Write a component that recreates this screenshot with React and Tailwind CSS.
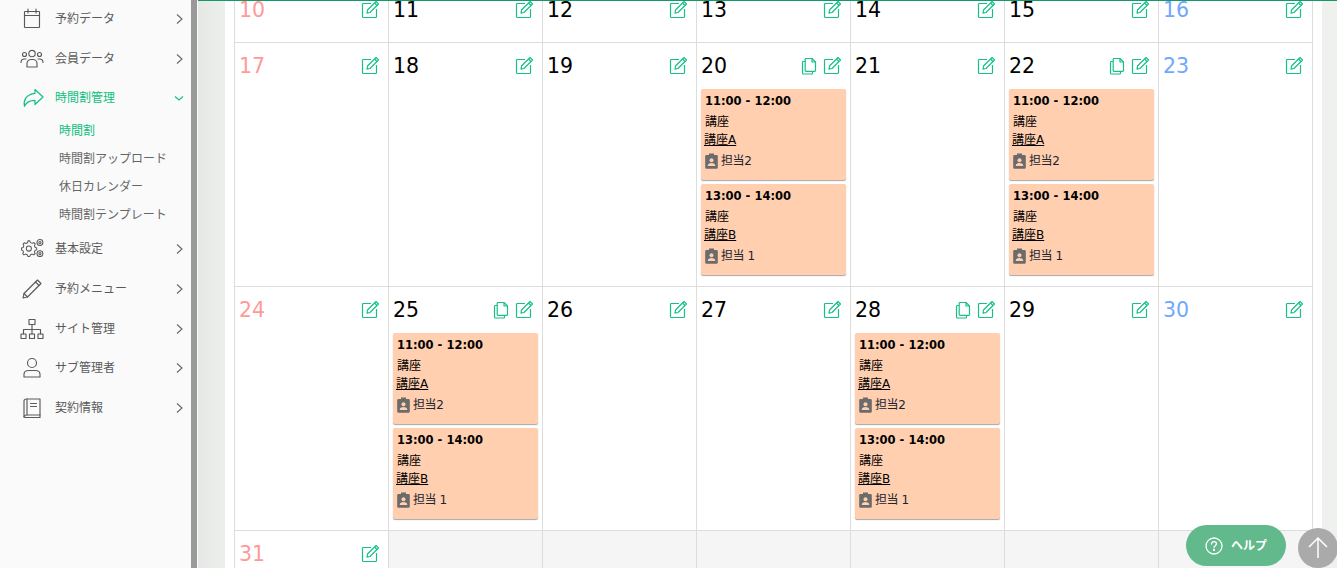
import React from "react";

const FONT = { fontFamily: '"DejaVu Sans","Noto Sans CJK JP",sans-serif' };

function S({ children, size = 24, cls = "" }) {
  return (
    <svg width={size} height={size} viewBox="0 0 24 24" fill="none" stroke="currentColor" strokeWidth="1.15" strokeLinecap="round" strokeLinejoin="round" className={cls}>
      {children}
    </svg>
  );
}

const icons = {
  calendar: (
    <S>
      <rect x="4.5" y="4.5" width="15" height="16" rx="0.5" />
      <path d="M4.5 8.5h15M8 2v4M16 2v4" />
    </S>
  ),
  users: (
    <S size={24}>
      <circle cx="12" cy="6.5" r="3.2" />
      <circle cx="4.5" cy="7.5" r="2" />
      <circle cx="19.5" cy="7.5" r="2" />
      <path d="M7 20v-3.5c0-2.200 1.800-4 4-4h2c2.200 0 4 1.800 4 4V20z" />
      <path d="M1 15.500c0-2 1.500-3.500 3.500-3.500H6M23 15.500c0-2-1.500-3.500-3.500-3.500H18" />
    </S>
  ),
  share: (
    <svg width="24" height="24" viewBox="0 0 24 24" fill="none" stroke="#12bf83" strokeWidth="1.2" strokeLinejoin="round" className="translate-x-[1px]">
      <path d="M14 3.500 22 11l-8 7.500v-4.200c-5 0-8.500 1.200-10.500 6-1.200-5.500 1-12 10.500-13z" />
    </svg>
  ),
  gears: (
    <svg width="24" height="24" viewBox="0 0 26 24" fill="none" stroke="currentColor" strokeWidth="1.1" strokeLinejoin="round" className="translate-x-[1px]">
      <path d="M8 5.500l2 .2.800 1.900 1.900.800 1.700-.9 1.500 1.500-.9 1.700.7 1.900 1.800.7v2l-1.800.7-.7 1.900.9 1.700-1.500 1.300-1.700-.9-1.900.8-.8 1.700h-2l-.7-1.700-1.900-.8-1.700.9-1.400-1.300.9-1.700-.8-1.900L1 15.500v-2l1.800-.7.8-1.900-.9-1.700 1.400-1.500 1.700.9 1.900-.8z" transform="translate(-0.500 -2.500)" />
      <circle cx="8.500" cy="11.500" r="2.800" />
      <circle cx="20.500" cy="5" r="3.200" />
      <circle cx="20.500" cy="5" r="1.200" />
      <circle cx="20.500" cy="17" r="3.200" />
      <circle cx="20.500" cy="17" r="1.200" />
    </svg>
  ),
  pencil: (
    <S>
      <path d="M4 16.500 17.500 3l3.500 3.500L7.500 20l-4.500 1z" />
      <path d="M15.500 5l3.500 3.500M4 16.500 7.500 20" />
    </S>
  ),
  sitemap: (
    <S size={24}>
      <rect x="9" y="2.500" width="6" height="5" />
      <rect x="1" y="17" width="5" height="4.500" />
      <rect x="9.500" y="17" width="5" height="4.500" />
      <rect x="18" y="17" width="5" height="4.500" />
      <path d="M12 7.500V17M3.500 17v-4.500h17V17" />
    </S>
  ),
  user: (
    <S>
      <circle cx="12" cy="7" r="4.500" />
      <path d="M4 21v-2.500c0-2.500 2-4 4.500-4h7c2.500 0 4.500 1.500 4.500 4V21z" />
    </S>
  ),
  book: (
    <S>
      <path d="M6.500 3H20v16H6.500C5 19 4 20 4 21V5c0-1 1-2 2.500-2z" />
      <path d="M4 20.500c0 .5 1 1 2.500 1H20V19M7 3v16M10.500 7.500h6M10.500 10.500h6" />
    </S>
  ),
};

function Chevron({ open }) {
  return open ? (
    <svg width="12" height="12" viewBox="0 0 12 12" fill="none" stroke="#12bf83" strokeWidth="1.100"><path d="M2 4.500 6 8l4-3.500" /></svg>
  ) : (
    <svg width="12" height="12" viewBox="0 0 12 12" fill="none" stroke="#666" strokeWidth="1.100"><path d="M4 1.500 9 6 4 10.500" /></svg>
  );
}

function NavRow({ icon, label, open }) {
  return (
    <div className={`flex items-center h-[39.750px] ${open ? "text-[#0fbf80]" : "text-[#5a5a5a]"}`}>
      <div className="w-[64px] shrink-0 flex justify-center">{icons[icon]}</div>
      <span className={`relative left-[-9px] flex-1 text-[12px] ${open ? "text-[#0fbf80]" : "text-[#5a5a5a]"}`}>{label}</span>
      <div className="w-[12px] mr-[6px]"><Chevron open={open} /></div>
    </div>
  );
}

function Sidebar() {
  return (
    <aside className="w-[191px] shrink-0 bg-[#fafafa] h-[600px] -mt-[1px]">
      <NavRow icon="calendar" label="予約データ" />
      <NavRow icon="users" label="会員データ" />
      <NavRow icon="share" label="時間割管理" open />
      <div className="pl-[59px] text-[12px] text-[#666] -mt-[1px]">
        <div className="h-[28px] leading-[28px] text-[#0fbf80]">時間割</div>
        <div className="h-[28px] leading-[28px]">時間割アップロード</div>
        <div className="h-[28px] leading-[28px]">休日カレンダー</div>
        <div className="h-[28px] leading-[28px]">時間割テンプレート</div>
      </div>
      <NavRow icon="gears" label="基本設定" />
      <NavRow icon="pencil" label="予約メニュー" />
      <NavRow icon="sitemap" label="サイト管理" />
      <NavRow icon="user" label="サブ管理者" />
      <NavRow icon="book" label="契約情報" />
    </aside>
  );
}

function EditIcon() {
  return (
    <svg width="19" height="19" viewBox="0 0 19 19" fill="none" stroke="#16c088" strokeWidth="1.200" strokeLinejoin="round">
      <path d="M10 3.500H2.500a1 1 0 0 0-1 1v12a1 1 0 0 0 1 1h12a1 1 0 0 0 1-1V9" />
      <path d="M6.500 10 15 1.500l2.500 2.500L9 12.500l-3 .7z" />
      <path d="M13.500 3l2.500 2.500" />
    </svg>
  );
}

function CopyIcon() {
  return (
    <svg width="16" height="18" viewBox="0 0 16 18" fill="none" stroke="#16c088" strokeWidth="1.200" strokeLinejoin="round">
      <path d="M5 1.500h6l3.500 3.500v8.500a.8.8 0 0 1-.8.8H5a.8.8 0 0 1-.8-.8V2.300A.8.800 0 0 1 5 1.500z" />
      <path d="M11 1.500V5h3.500" />
      <path d="M4 4.500H2.300a.8.8 0 0 0-.8.8v10.900a.8.800 0 0 0 .8.8h8.400a.8.800 0 0 0 .8-.8V14.500" />
    </svg>
  );
}

function BadgeIcon() {
  return (
    <svg width="13" height="16" viewBox="0 0 13 16" className="shrink-0">
      <path fill="#6b6b6b" d="M4 0.500h5v1.500h2.500a1.300 1.300 0 0 1 1.300 1.300v11.200a1.300 1.300 0 0 1-1.300 1.300h-10A1.300 1.300 0 0 1 .2 14.500V3.300A1.300 1.300 0 0 1 1.500 2H4z" />
      <circle cx="6.500" cy="7.300" r="2" fill="#ffcfb0" />
      <path fill="#ffcfb0" d="M2.800 13v-.8c0-1.500 2.400-2.200 3.700-2.200s3.700.7 3.700 2.200v.8z" />
    </svg>
  );
}

function EventCard({ time, name, sub, staff }) {
  return (
    <div className="h-[91px] mb-[4px] rounded-[2px] bg-[#ffcfb0] shadow-[0_1px_1px_rgba(0,0,0,0.35)] pl-[4px] pt-[3px] text-black text-[12px]">
      <div className="h-[18px] leading-[18px] text-[11.500px] font-bold whitespace-nowrap">{time}</div>
      <div className="mt-[3px] h-[18px] leading-[19px]">{name}</div>
      <div className="h-[18px] leading-[18px] underline -ml-[1px]">{sub}</div>
      <div className="mt-[2px] flex items-center h-[19px] text-[#1b2430]">
        <BadgeIcon />
        <span className="ml-[3px] tracking-[-0.400px]">{staff}</span>
      </div>
    </div>
  );
}

const A = { time: "11:00 - 12:00", name: "講座", sub: "講座A", staff: "担当2" };
const B = { time: "13:00 - 14:00", name: "講座", sub: "講座B", staff: "担当 1" };

function Cell({ day, color = "text-black", events, empty, last }) {
  if (empty) {
    return <div className={`bg-[#f5f5f5] border-l border-[#ddd] h-[60px] ${last ? "border-r" : ""}`} />;
  }
  return (
    <div className={`bg-white border-l border-[#ddd] pl-[4px] pr-[4px] ${last ? "border-r" : ""}`}>
      <div className="flex items-center h-[46px] pb-[1px]">
        <span className={`text-[20.500px] leading-none flex-1 -mb-[2px] ${color}`}>{day}</span>
        <div className="flex items-center gap-[6px] pr-[4px]">
          {events && <CopyIcon />}
          <EditIcon />
        </div>
      </div>
      {events && (
        <div>
          <EventCard {...A} />
          <EventCard {...B} />
        </div>
      )}
    </div>
  );
}

const RED = "text-[#ff9a9a]";
const BLUE = "text-[#6fa8ff]";

function Row({ children, cls }) {
  return <div className={`grid grid-cols-[repeat(6,154px)_155px] border-b border-[#ddd] w-[1079px] ${cls}`}>{children}</div>;
}

export default function App() {
  return (
    <div className="flex w-[1337px] h-[568px] overflow-hidden relative bg-[#eff1ef]" style={FONT}>
      <Sidebar />
      <div className="w-[6px] shrink-0 bg-[#999]" />
      <div className="w-[1px] shrink-0 bg-[#fafafa]" />
      <main className="flex-1 min-w-0 border-t border-[#159a63] bg-gradient-to-r from-[#e6e8e6] to-[#eff1ef] to-[3%] overflow-hidden">
        <div className="ml-[27px] w-[1097px] h-[620px] bg-white pl-[9px] -mt-[14px]">
          <Row cls="h-[56px]">
            <Cell day="10" color={RED} />
            <Cell day="11" />
            <Cell day="12" />
            <Cell day="13" />
            <Cell day="14" />
            <Cell day="15" />
            <Cell day="16" color={BLUE} last />
          </Row>
          <Row cls="h-[244px]">
            <Cell day="17" color={RED} />
            <Cell day="18" />
            <Cell day="19" />
            <Cell day="20" events />
            <Cell day="21" />
            <Cell day="22" events />
            <Cell day="23" color={BLUE} last />
          </Row>
          <Row cls="h-[244px]">
            <Cell day="24" color={RED} />
            <Cell day="25" events />
            <Cell day="26" />
            <Cell day="27" />
            <Cell day="28" events />
            <Cell day="29" />
            <Cell day="30" color={BLUE} last />
          </Row>
          <div className="grid grid-cols-[repeat(6,154px)_155px] w-[1079px]">
            <Cell day="31" color={RED} />
            <Cell empty />
            <Cell empty />
            <Cell empty />
            <Cell empty />
            <Cell empty />
            <Cell empty last />
          </div>
        </div>
      </main>
      <div className="absolute left-[1186px] top-[525px] w-[100px] h-[41px] rounded-full bg-[#61b98c] flex items-center justify-center gap-[8px] text-white text-[12px] font-bold">
        <svg width="18" height="18" viewBox="0 0 18 18" fill="none" stroke="white" strokeWidth="1.300">
          <circle cx="9" cy="9" r="8" />
          <path d="M6.500 7c0-1.500 1.100-2.400 2.500-2.400s2.500.9 2.500 2.200c0 1.800-2.500 1.900-2.500 3.700" strokeLinecap="round" />
          <circle cx="9" cy="13" r=".5" fill="white" />
        </svg>
        <span>ヘルプ</span>
      </div>
      <div className="absolute left-[1298px] top-[528px] w-[40px] h-[40px] rounded-full bg-[#aaa] flex items-center justify-center">
        <svg width="24" height="24" viewBox="0 0 24 24" fill="none" stroke="white" strokeWidth="1.500">
          <path d="M12 22V2M3 11l9-9 9 9" />
        </svg>
      </div>
    </div>
  );
}
